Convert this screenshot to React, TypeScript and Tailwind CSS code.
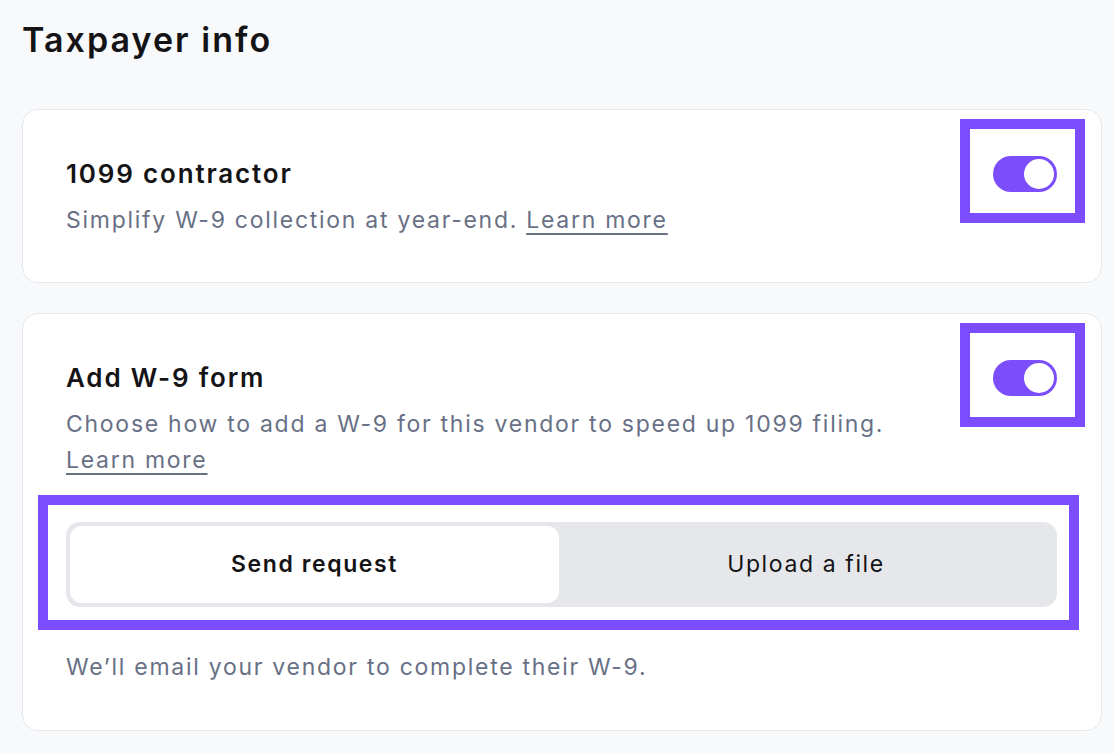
import { useState } from "react";

function Toggle({ on }: { on: boolean }) {
  return (
    <div className="relative h-[36px] w-[64px] shrink-0">
      <div
        className={
          "flex h-[36px] w-[64px] items-center rounded-full px-[3px] " +
          (on ? "justify-end bg-[#7b4dfb]" : "justify-start bg-[#d1d5db]")
        }
      >
        <div className="h-[30px] w-[30px] rounded-full bg-white" />
      </div>
      <div className="pointer-events-none absolute -left-[33px] -right-[28px] -top-[37px] -bottom-[31px] border-[10px] border-[#7c4dff]" />
    </div>
  );
}

export default function App() {
  const [mode, setMode] = useState<"send" | "upload">("send");

  return (
    <main className="min-h-screen bg-[#f8f9fb] px-[22px] pt-[20px] font-['Inter',sans-serif] text-[#141416]">
      <h1 className="text-[34px] font-semibold leading-[40px] tracking-[0.06em]">Taxpayer info</h1>

      <div className="mt-[49px] flex w-[1080px] flex-col gap-[30px]">
        <section className="rounded-[16px] border border-[#e6e8ec] bg-white pb-[44px] pl-[43px] pr-[44px] pt-[46px]">
          <div className="flex h-[36px] items-center justify-between">
            <h2 className="text-[26px] font-semibold leading-[36px] tracking-[0.07em]">1099 contractor</h2>
            <Toggle on />
          </div>
          <p className="mt-[10px] text-[23px] leading-[36px] tracking-[0.075em] text-[#687085]">
            Simplify W-9 collection at year-end.{" "}
            <a href="#" className="underline underline-offset-[5px]">
              Learn more
            </a>
          </p>
        </section>

        <section className="rounded-[16px] border border-[#e6e8ec] bg-white pb-[45px] pl-[43px] pr-[44px] pt-[46px]">
          <div className="flex h-[36px] items-center justify-between">
            <h2 className="text-[26px] font-semibold leading-[36px] tracking-[0.07em]">Add W-9 form</h2>
            <Toggle on />
          </div>
          <p className="mt-[10px] max-w-[860px] text-[23px] leading-[36px] tracking-[0.075em] text-[#687085]">
            Choose how to add a W-9 for this vendor to speed up 1099 filing.{" "}
            <a href="#" className="underline underline-offset-[5px]">
              Learn more
            </a>
          </p>

          <div className="relative mt-[44px]">
            <div className="grid grid-cols-[489px_1fr] rounded-[14px] bg-[#e6e7eb] p-[4px]">
              <button
                onClick={() => setMode("send")}
                className={
                  "h-[77px] rounded-[12px] text-[23px] tracking-[0.07em] " +
                  (mode === "send" ? "bg-white font-semibold" : "font-normal")
                }
              >
                Send request
              </button>
              <button
                onClick={() => setMode("upload")}
                className={
                  "h-[77px] rounded-[12px] text-[23px] tracking-[0.07em] " +
                  (mode === "upload" ? "bg-white font-semibold" : "font-normal")
                }
              >
                Upload a file
              </button>
            </div>
            <div className="pointer-events-none absolute -left-[28px] -right-[22px] -top-[27px] -bottom-[23px] border-[10px] border-[#7c4dff]" />
          </div>

          <p className="mt-[42px] text-[23px] leading-[36px] tracking-[0.075em] text-[#687085]">
            We’ll email your vendor to complete their W-9.
          </p>
        </section>
      </div>
    </main>
  );
}
